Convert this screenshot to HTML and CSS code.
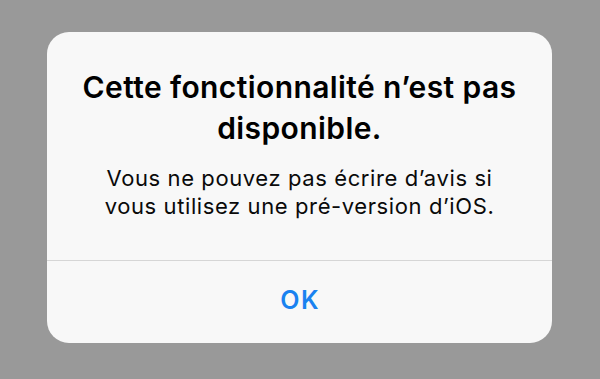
FILE: index.html
```html
<!DOCTYPE html>
<html lang="fr">
<head>
<meta charset="utf-8">
<title>Alerte</title>
<link rel="stylesheet" href="styles.css">
</head>
<body>
<div class="screen">
  <div class="alert">
    <div class="alert-content">
      <h1 class="alert-title">Cette fonctionnalité n’est pas disponible.</h1>
      <p class="alert-message">Vous ne pouvez pas écrire d’avis si vous utilisez une pré-version d’iOS.</p>
    </div>
    <div class="alert-actions">
      <button class="alert-button">OK</button>
    </div>
  </div>
</div>
</body>
</html>
```

FILE: styles.css
```css
html, body {
  margin: 0;
  padding: 0;
}
body {
  background: #999999;
  font-family: Inter, "Noto Sans", "Liberation Sans", sans-serif;
}
.screen {
  width: 600px;
  height: 379px;
  padding: 32px 0 0 47px;
  box-sizing: border-box;
}
.alert {
  width: 505px;
  height: 311px;
  background: #f8f8f8;
  border-radius: 22px;
  display: flex;
  flex-direction: column;
  overflow: hidden;
}
.alert-content {
  height: 229px;
  box-sizing: border-box;
  padding: 35px 16px 0;
  text-align: center;
  border-bottom: 1px solid #d6d6d6;
}
.alert-title {
  margin: 0;
  font-size: 30px;
  line-height: 41px;
  font-weight: 600;
  letter-spacing: 0.4px;
  color: #000;
}
.alert-message {
  margin: 15px auto 0;
  width: 420px;
  font-size: 22px;
  line-height: 28px;
  font-weight: 400;
  letter-spacing: 0.6px;
  color: #0a0a0a;
}
.alert-actions {
  flex: 1;
  display: flex;
  padding-bottom: 4px;
}
.alert-button {
  flex: 1;
  border: 0;
  background: transparent;
  font-family: inherit;
  font-size: 25px;
  font-weight: 600;
  letter-spacing: 1.5px;
  padding: 0 0 0 1.5px;
  color: #1a82f0;
}
```
